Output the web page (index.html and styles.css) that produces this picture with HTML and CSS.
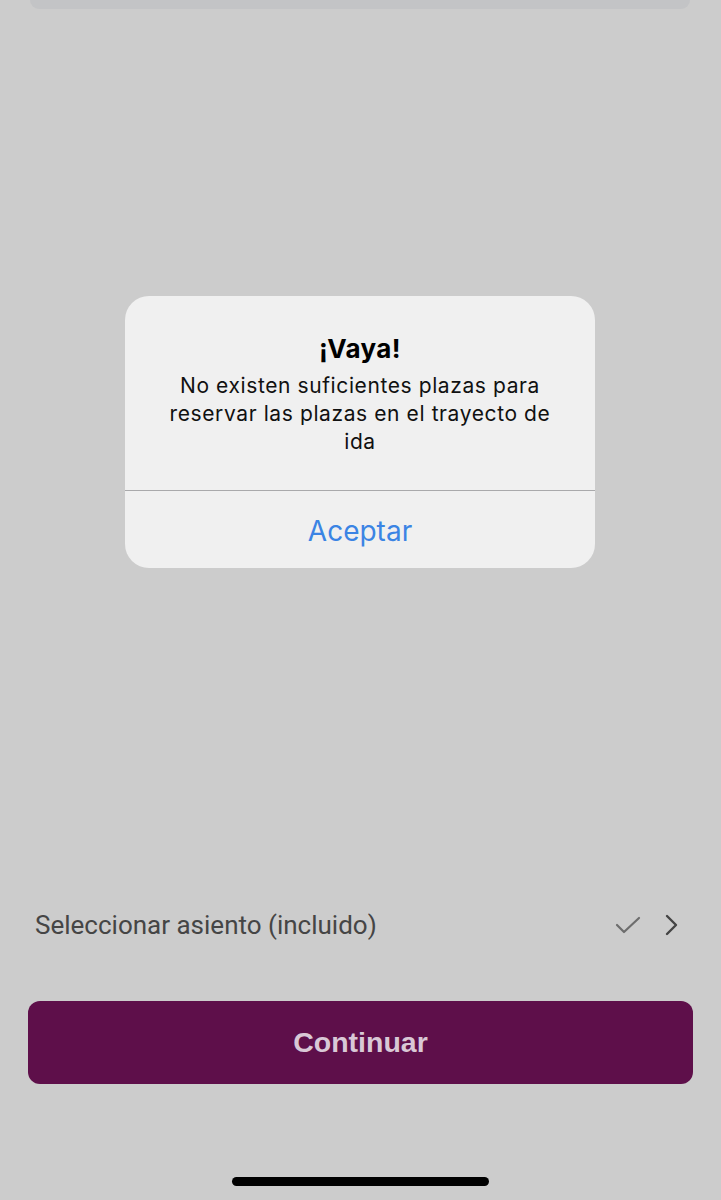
FILE: index.html
```html
<!DOCTYPE html>
<html lang="es">
<head>
<meta charset="utf-8">
<link rel="stylesheet" href="styles.css">
</head>
<body>
<div class="screen">
  <div class="top-card"></div>
  <div class="spacer"></div>
  <div class="seat-row">
    <span class="seat-label">Seleccionar asiento (incluido)</span>
    <span class="seat-icons">
      <svg class="check" width="28" height="22" viewBox="0 0 28 22"><path d="M3 11 L10 18 L25 4" fill="none" stroke="#6d6d6d" stroke-width="2.2" stroke-linecap="round" stroke-linejoin="round"/></svg>
      <svg class="chev" width="16" height="24" viewBox="0 0 16 24"><path d="M4 3 L13 12 L4 21" fill="none" stroke="#444" stroke-width="2.4" stroke-linecap="round" stroke-linejoin="round"/></svg>
    </span>
  </div>
  <button class="continue">Continuar</button>
  <div class="home-wrap"><div class="home-bar"></div></div>
</div>

<div class="alert">
  <div class="alert-body">
    <div class="alert-title">¡Vaya!</div>
    <div class="alert-msg">No existen suficientes plazas para reservar las plazas en el trayecto de ida</div>
  </div>
  <div class="alert-action">Aceptar</div>
</div>
</body>
</html>
```

FILE: styles.css
```css
* { box-sizing: border-box; }
html, body {
  margin: 0;
  padding: 0;
  width: 721px;
  height: 1200px;
  background: #cccccc;
  overflow: hidden;
}
.screen {
  width: 721px;
  height: 1200px;
  display: flex;
  flex-direction: column;
}
.top-card {
  height: 9px;
  margin: 0 31px 0 30px;
  background: #c3c4c6;
  border-radius: 0 0 14px 14px;
}
.spacer { flex: 1; }
.seat-row {
  height: 50px;
  margin: 0 42px 0 35px;
  display: flex;
  align-items: center;
  justify-content: space-between;
}
.seat-label {
  font-family: Roboto, "Liberation Sans", sans-serif;
  font-size: 26px;
  color: #454545;
  letter-spacing: 0;
}
.seat-icons {
  display: flex;
  align-items: center;
  gap: 21px;
}
.continue {
  margin: 51px 28px 0 28px;
  height: 83px;
  border: none;
  border-radius: 12px;
  background: #5e0f4a;
  color: #d9c8d6;
  font-family: "Liberation Sans", Arial, sans-serif;
  font-weight: bold;
  font-size: 28.5px;
  padding: 0;
}
.home-wrap {
  height: 116px;
  display: flex;
  justify-content: center;
  align-items: flex-end;
  padding-bottom: 14px;
}
.home-bar {
  width: 257px;
  height: 9px;
  background: #000;
  border-radius: 5px;
}
.alert {
  position: absolute;
  left: 125px;
  top: 296px;
  width: 470px;
  height: 272px;
  background: #f0f0f0;
  border-radius: 24px;
  display: flex;
  flex-direction: column;
  font-family: Inter, "Noto Sans", sans-serif;
}
.alert-body {
  padding: 38px 35px 0 35px;
  height: 195px;
  border-bottom: 1px solid #a9a9ab;
  text-align: center;
}
.alert-title {
  font-size: 26px;
  font-weight: 700;
  line-height: 30px;
  color: #000;
  letter-spacing: 0.4px;
}
.alert-msg {
  margin-top: 8px;
  font-size: 21px;
  line-height: 28px;
  color: #111;
  letter-spacing: 0.6px;
}
.alert-action {
  flex: 1;
  display: flex;
  align-items: center;
  justify-content: center;
  font-size: 28px;
  color: #3b84e4;
  padding-top: 2px;
}
```
